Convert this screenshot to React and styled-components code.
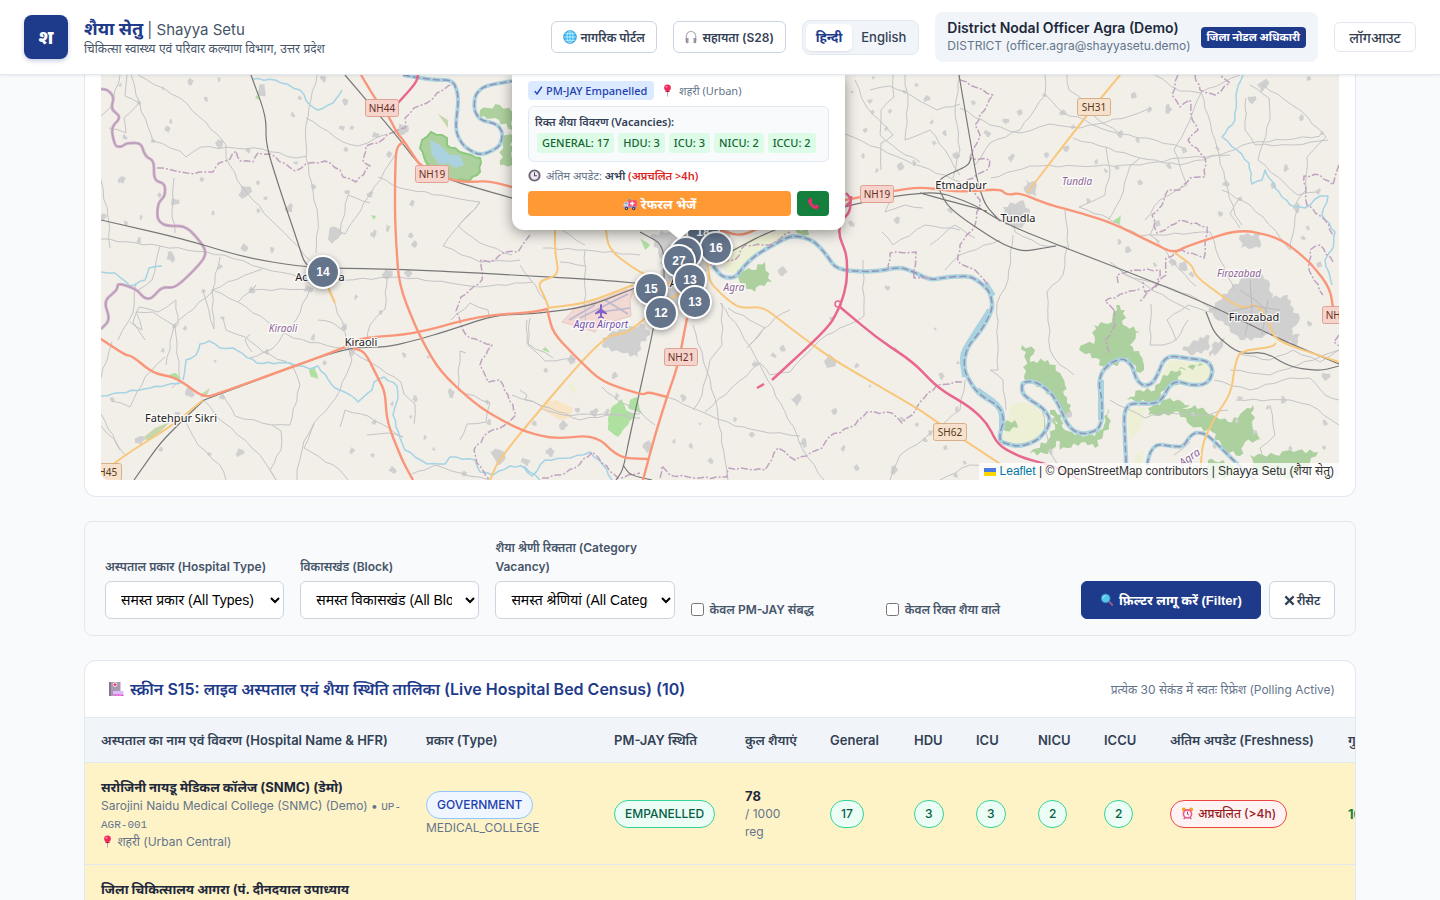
import React from 'react';
import styled, { createGlobalStyle } from 'styled-components';

const GlobalStyle = createGlobalStyle`
  *, *::before, *::after { box-sizing: border-box; }
  body {
    margin: 0;
    background: #f8fafc;
    color: #1e293b;
    font-family: Inter, 'Noto Sans', 'Noto Sans Devanagari', sans-serif;
    font-size: 14px;
  }
  button, a, select { font-family: inherit; }
`;

/* ---------- icons ---------- */

const Icon = styled.svg`
  width: ${(p) => p.$size || 14}px;
  height: ${(p) => p.$size || 14}px;
  flex: none;
  vertical-align: -2px;
`;

const GlobeIcon = () => (
  <Icon viewBox="0 0 16 16" aria-hidden="true">
    <circle cx="8" cy="8" r="7.3" fill="#35b7ee" />
    <g fill="none" stroke="#d8f3ff" strokeWidth="0.9">
      <ellipse cx="8" cy="8" rx="3.4" ry="7.2" />
      <path d="M8 .8v14.4M.8 8h14.4M2 4.2h12M2 11.8h12" />
    </g>
    <circle cx="8" cy="8" r="7.3" fill="none" stroke="#1683c4" strokeWidth="0.7" />
  </Icon>
);

const HeadphoneIcon = () => (
  <Icon viewBox="0 0 16 16" aria-hidden="true">
    <path d="M2.6 11V7.5a5.4 5.9 0 0 1 10.8 0V11" fill="none" stroke="#b9b3bf" strokeWidth="1.5" />
    <rect x="2" y="9" width="3.6" height="6" rx="1.6" fill="#8d8394" />
    <rect x="10.4" y="9" width="3.6" height="6" rx="1.6" fill="#8d8394" />
    <rect x="4.2" y="9.4" width="1.4" height="5.2" rx="0.7" fill="#d9d3dd" />
    <rect x="10.4" y="9.4" width="1.4" height="5.2" rx="0.7" fill="#d9d3dd" />
  </Icon>
);

const PushpinIcon = () => (
  <Icon viewBox="0 0 16 16" $size={13} aria-hidden="true">
    <path d="M7.3 8h1.4L8.3 15.6h-.6z" fill="#9b93a3" />
    <circle cx="8" cy="4.6" r="4.1" fill="#f0285f" />
    <circle cx="6.8" cy="3.4" r="1.3" fill="#ff8ba6" />
    <path d="M5 8.2h6l-.8 1.6H5.8z" fill="#c81a4c" />
  </Icon>
);

const ClockIcon = () => (
  <Icon viewBox="0 0 16 16" $size={13} aria-hidden="true">
    <circle cx="8" cy="8" r="6.3" fill="#eee9f1" stroke="#6d6474" strokeWidth="2.4" />
    <path d="M8 4v4.3h3" fill="none" stroke="#51475a" strokeWidth="1.3" />
  </Icon>
);

const AmbulanceIcon = () => (
  <Icon viewBox="0 0 16 16" aria-hidden="true">
    <path d="M5.5 3.6h10v8.8h-10z" fill="#f14d77" />
    <path d="M.6 8.6 2.6 5.4h3.6v7H.6z" fill="#ded4ea" />
    <path d="M1.8 8.4 3 6.4h2v2z" fill="#4db3e8" />
    <path d="M9.7 5h1.6v1.7H13v1.6h-1.7V10H9.7V8.3H8V6.7h1.7z" fill="#fff" />
    <path d="M.4 10.6h15.2v2H.4z" fill="#a594c4" />
    <circle cx="4" cy="13" r="1.9" fill="#433a4e" />
    <circle cx="12.2" cy="13" r="1.9" fill="#433a4e" />
    <circle cx="4" cy="13" r=".7" fill="#c9bfd6" />
    <circle cx="12.2" cy="13" r=".7" fill="#c9bfd6" />
    <path d="M6.4 2.2h2.2v1.4H6.4z" fill="#3da0ee" />
  </Icon>
);

const PhoneIcon = () => (
  <Icon viewBox="0 0 16 16" $size={13} aria-hidden="true">
    <path
      d="M1.4 3.2 3.6 1c.5-.4 1-.3 1.4.2l1.6 2.4c.3.5.2.9-.2 1.3l-1 1c.9 2 2.5 3.7 4.8 4.9l1-1c.4-.4.9-.5 1.3-.1l2.3 1.6c.5.4.6.9.2 1.4l-2 2C8.2 16.4.2 8.8 1.4 3.2z"
      fill="#e62f6f"
    />
    <path d="m1.4 3.2 2.2-2.2 1 .4-2.3 2.7zM13 14.7l2-2-.5-.9-2.6 2.3z" fill="#a92358" />
  </Icon>
);

const SearchIcon = () => (
  <Icon viewBox="0 0 16 16" aria-hidden="true">
    <path d="m9.4 10.2 1.5-1.5 4 4.3c.7.9-.8 2.5-1.7 1.7z" fill="#9b5a92" />
    <circle cx="6.5" cy="6.2" r="5" fill="#53c8ec" stroke="#3b87b5" strokeWidth="1" />
    <path d="M3.6 6a3 3 0 0 1 2.6-2.9" fill="none" stroke="#b7efff" strokeWidth="1" />
  </Icon>
);

const HospitalIcon = () => (
  <Icon viewBox="0 0 16 16" $size={16} aria-hidden="true">
    <path d="M1 1h11.5v14H1z" fill="#a89bb0" />
    <path d="M1 1h2v14H1z" fill="#85778f" />
    <circle cx="7" cy="3.6" r="2.3" fill="#fbdfe8" />
    <path d="M6.4 2.2h1.2v.8h.8v1.2h-.8V5H6.4v-.8h-.8V3h.8z" fill="#ec2b64" />
    <path d="M5 10h10.5v3.5H5z" fill="#dfb9ff" />
    <path d="M5 13.5h10.5V15H5z" fill="#e24fd0" />
    <path d="M6 15v-1.2M9 15v-1.2M12 15v-1.2" stroke="#fff" strokeWidth=".7" />
  </Icon>
);

const AlarmIcon = () => (
  <Icon viewBox="0 0 16 16" $size={13} aria-hidden="true">
    <circle cx="3.5" cy="3" r="2.4" fill="#f6a41f" />
    <circle cx="12.5" cy="3" r="2.4" fill="#f6a41f" />
    <path d="m3.4 15 1.6-2.4M12.6 15 11 12.6" stroke="#8b6a8b" strokeWidth="1.6" />
    <circle cx="8" cy="8.6" r="5" fill="#fff0f4" stroke="#f0568a" strokeWidth="2" />
    <path d="M8 5.6v3.2l1.6 1" fill="none" stroke="#4d3a55" strokeWidth="1.1" />
  </Icon>
);

const CheckIcon = () => (
  <Icon viewBox="0 0 12 12" $size={9} aria-hidden="true">
    <path d="M1 6.8 4 10.5 10.5 1" fill="none" stroke="#1e40af" strokeWidth="1.9" />
  </Icon>
);

const CrossIcon = () => (
  <Icon viewBox="0 0 12 12" $size={11} aria-hidden="true">
    <path d="m1.5 1.5 9 9M10.5 1.5l-9 9" fill="none" stroke="#334155" strokeWidth="2.4" />
  </Icon>
);

/* ---------- header ---------- */

const Shell = styled.div`
  display: flex;
  flex-direction: column;
  height: 100vh;
  overflow: hidden;
`;

const TopBar = styled.header`
  display: flex;
  flex: none;
  align-items: center;
  justify-content: space-between;
  gap: 16px;
  padding: 12px 24px;
  background: #fff;
  border-bottom: 1px solid #e2e8f0;
  box-shadow: 0 1px 3px rgba(15, 23, 42, 0.08);
  position: relative;
  z-index: 2;
  white-space: nowrap;
`;

const Brand = styled.div`
  display: flex;
  align-items: center;
  gap: 16px;
`;

const LogoMark = styled.div`
  display: grid;
  place-items: center;
  width: 44px;
  height: 44px;
  border-radius: 8px;
  background: #1e3a8a;
  color: #fff;
  font-size: 19px;
  font-weight: 800;
  box-shadow: 0 2px 4px rgba(30, 58, 138, 0.25);
`;

const BrandName = styled.h1`
  margin: 0;
  color: #1e3a8a;
  font-size: 18px;
  line-height: 22px;
  font-weight: 700;

  span {
    color: #475569;
    font-size: 15px;
    font-weight: 400;
  }
`;

const BrandSub = styled.p`
  margin: 0;
  color: #475569;
  font-size: 12px;
  line-height: 16px;
`;

const TopActions = styled.nav`
  display: flex;
  align-items: center;
  gap: 16px;
`;

const PillLink = styled.a`
  display: inline-flex;
  align-items: center;
  justify-content: center;
  gap: 4px;
  min-width: ${(p) => p.$width}px;
  height: 32px;
  border: 1px solid #cbd5e1;
  border-radius: 6px;
  background: #fff;
  color: #334155;
  font-size: 12px;
  font-weight: 600;
  text-decoration: none;
`;

const LangSwitch = styled.div`
  display: flex;
  padding: 3px;
  border: 1px solid #e2e8f0;
  border-radius: 8px;
  background: #f1f5f9;
`;

const LangButton = styled.button`
  height: 27px;
  padding: 0 ${(p) => (p.$active ? 10 : 9)}px;
  border: 0;
  border-radius: 5px;
  background: ${(p) => (p.$active ? '#fff' : 'transparent')};
  color: ${(p) => (p.$active ? '#1e3a8a' : '#334155')};
  font-size: 13px;
  font-weight: ${(p) => (p.$active ? 700 : 500)};
  box-shadow: ${(p) => (p.$active ? '0 1px 2px rgba(15, 23, 42, 0.1)' : 'none')};
`;

const UserBox = styled.div`
  display: flex;
  align-items: center;
  gap: 10px;
  height: 50px;
  padding: 0 12px;
  border-radius: 8px;
  background: #f1f5f9;
`;

const UserName = styled.div`
  font-size: 14px;
  line-height: 18px;
  font-weight: 600;
`;

const UserMail = styled.div`
  color: #64748b;
  font-size: 12px;
  line-height: 18px;
`;

const RoleTag = styled.span`
  padding: 2px 6px;
  border-radius: 4px;
  background: #1e3a8a;
  color: #fff;
  font-size: 11px;
  line-height: 17px;
  font-weight: 700;
`;

const LogoutButton = styled.button`
  width: 82px;
  height: 30px;
  padding: 0;
  border: 1px solid #e2e8f0;
  border-radius: 6px;
  background: #fff;
  color: #334155;
  font-size: 14px;
  font-weight: 500;
`;

/* ---------- map ---------- */

const Main = styled.main`
  display: flex;
  flex-direction: column;
  gap: 24px;
  width: 100%;
  max-width: 1320px;
  margin: 0 auto;
  padding: 0 24px;
`;

const MapCard = styled.section`
  padding: 0 16px 16px;
  border: 1px solid #e2e8f0;
  border-top: 0;
  border-radius: 0 0 12px 12px;
  background: #fff;
`;

const MapFrame = styled.div`
  position: relative;
  height: 405px;
  overflow: hidden;
  border-radius: 0 0 8px 8px;
  background: #f2efe9;
`;

const MapSvg = styled.svg`
  display: block;
  width: 100%;
  height: 100%;
  font-family: 'Noto Sans', sans-serif;
`;

const Marker = styled.button`
  position: absolute;
  left: calc(50% + ${(p) => p.$x - 737}px);
  top: ${(p) => p.$y - 92}px;
  width: 34px;
  height: 34px;
  padding: 0;
  border: 2px solid #fff;
  border-radius: 50%;
  background: #64748b;
  color: #fff;
  font: 700 12px 'Liberation Sans', sans-serif;
  box-shadow: 0 2px 6px rgba(0, 0, 0, 0.35);
`;

const Popup = styled.div`
  position: absolute;
  left: calc(50% - 208px);
  bottom: 250px;
  width: 333px;
  padding: 7px 16px 14px;
  border-radius: 0 0 12px 12px;
  background: #fff;
  font-family: 'Noto Sans', 'Noto Sans Devanagari', sans-serif;
  font-size: 11px;
  box-shadow: 0 3px 14px rgba(0, 0, 0, 0.4);

  &::after {
    content: '';
    position: absolute;
    left: 50%;
    top: 100%;
    margin-left: -11px;
    border: 11px solid transparent;
    border-top: 9px solid #fff;
    border-bottom: 0;
  }
`;

const PopupLine = styled.div`
  display: flex;
  align-items: center;
  gap: 5px;
  height: 19px;
  margin-bottom: 6px;
  color: #64748b;
  white-space: nowrap;

  strong { color: #334155; font-weight: 600; }
  em { color: #dc2626; font-style: normal; font-weight: 600; }
`;

const PmjayTag = styled.span`
  display: inline-flex;
  align-items: center;
  gap: 3px;
  width: 126px;
  margin-right: 2px;
  padding-left: 6px;
  border-radius: 4px;
  background: #dbeafe;
  color: #1e40af;
  line-height: 19px;
  font-weight: 500;
`;

const VacancyBox = styled.div`
  height: 56px;
  margin-bottom: 4px;
  padding: 5px 6px;
  border: 1px solid #e2e8f0;
  border-radius: 6px;
  background: #f8fafc;
  color: #334155;
  line-height: 19px;
  font-weight: 600;
`;

const ChipRow = styled.div`
  display: flex;
  gap: 4px;
  margin: 2px 2px 0;
`;

const Chip = styled.span`
  padding: 0 5px;
  border-radius: 3px;
  background: #dcfce7;
  color: #166534;
  line-height: 20px;
  font-weight: 500;
  white-space: nowrap;
`;

const PopupActions = styled.div`
  display: grid;
  grid-template-columns: 1fr 32px;
  gap: 6px;
`;

const PopupButton = styled.button`
  display: flex;
  align-items: center;
  justify-content: center;
  gap: 4px;
  height: 25px;
  padding: 0;
  border: 0;
  border-radius: 4px;
  background: ${(p) => (p.$call ? '#15803d' : '#ff9933')};
  color: #fff;
  font-size: 13px;
  font-weight: 700;
`;

const Attribution = styled.div`
  position: absolute;
  right: 0;
  bottom: 0;
  display: flex;
  align-items: center;
  gap: 4px;
  padding: 0 5px;
  background: rgba(255, 255, 255, 0.8);
  color: #333;
  font: 12px/17px 'Liberation Sans', 'Noto Sans', sans-serif;
  white-space: nowrap;

  a { color: #0078a8; text-decoration: none; }
`;

const FlagIcon = styled.svg`
  width: 12px;
  height: 8px;
`;

// "M1 2 3 4M5 6 7 8" -> [[[1, 2], [3, 4]], [[5, 6], [7, 8]]]
const parse = (d) =>
  d.replace(/z/g, '').split('M').filter(Boolean).map((part) => {
    const n = part.trim().split(/\s+/).map(Number);
    return n.filter((_, i) => i % 2 === 0).map((x, i) => [x, n[i * 2 + 1]]);
  });

// rounds the corners of a polyline
const smooth = (list) =>
  parse(list.join('')).map((pts) => {
    let d = `M${pts[0].join(' ')}`;
    for (let i = 1; i < pts.length - 1; i++) {
      const [ax, ay] = pts[i - 1];
      const [x, y] = pts[i];
      const [bx, by] = pts[i + 1];
      d += `L${x + (ax - x) * 0.4} ${y + (ay - y) * 0.4}Q${x} ${y} ${x + (bx - x) * 0.4} ${y + (by - y) * 0.4}`;
    }
    return `${d}L${pts[pts.length - 1].join(' ')}`;
  }).join('');

// breaks long edges into short ragged ones
const ragged = (list, amp, step, close) =>
  parse(list.join('')).map((pts) => {
    const all = close ? [...pts, pts[0]] : pts;
    let d = `M${all[0].join(' ')}`;
    for (let i = 1; i < all.length; i++) {
      const [ax, ay] = all[i - 1];
      const [bx, by] = all[i];
      const len = Math.hypot(bx - ax, by - ay) || 1;
      const n = Math.max(1, Math.round(len / step));
      for (let k = 1; k < n; k++) {
        const off = Math.sin(ax * 3.1 + by * 1.7 + k * 2.4) * amp;
        const t = k / n;
        d += `L${(ax + (bx - ax) * t - ((by - ay) / len) * off).toFixed(1)} ${(ay + (by - ay) * t + ((bx - ax) / len) * off).toFixed(1)}`;
      }
      d += `L${bx} ${by}`;
    }
    return close ? `${d}z` : d;
  }).join('');

const villages = [
  [120, 85, 2], [163, 89, 2], [139, 103, 3], [191, 82, 4], [219, 79, 3], [206, 99, 3], [167, 129, 4], [171, 122, 3],
  [125, 137, 3], [153, 141, 3], [219, 143, 6], [248, 151, 3], [296, 163, 3], [122, 180, 5], [202, 179, 3], [174, 202, 6],
  [245, 192, 8], [258, 183, 3], [266, 198, 3], [289, 208, 5], [213, 213, 3], [258, 211, 3], [104, 217, 4], [141, 217, 3],
  [126, 223, 3], [159, 195, 3], [262, 92, 8], [293, 115, 3], [300, 98, 3], [345, 101, 5], [323, 79, 4], [342, 128, 4],
  [352, 128, 3], [346, 149, 3], [375, 135, 5], [402, 130, 8], [389, 155, 4], [348, 192, 4], [370, 194, 4], [412, 203, 4],
  [313, 187, 4], [335, 235, 9], [388, 228, 4], [375, 232, 3], [414, 244, 4], [139, 241, 4], [171, 257, 6], [245, 248, 5],
  [272, 249, 4], [335, 233, 7], [373, 235, 4], [411, 236, 4], [252, 290, 4], [308, 289, 6], [387, 274, 7], [408, 274, 5],
  [223, 318, 3], [175, 326, 3], [185, 328, 3], [203, 291, 3], [220, 267, 3], [356, 297, 3], [381, 312, 3], [344, 327, 4],
  [313, 338, 4], [267, 352, 3], [325, 363, 3], [352, 350, 6], [404, 355, 3], [428, 357, 2], [163, 351, 3], [190, 392, 6],
  [222, 397, 4], [215, 361, 2], [112, 400, 3], [178, 414, 4], [140, 440, 6], [161, 449, 3], [209, 454, 3], [240, 453, 5],
  [352, 451, 4], [373, 455, 3], [374, 422, 3], [392, 404, 3], [415, 399, 4], [411, 417, 2], [425, 437, 3], [451, 393, 5],
  [487, 402, 3], [489, 423, 4], [434, 449, 2], [393, 470, 5], [464, 473, 4], [498, 457, 9], [526, 462, 6], [550, 452, 5],
  [546, 370, 3], [534, 424, 3], [534, 423, 3], [563, 426, 6], [578, 410, 4], [594, 412, 5], [607, 412, 4], [571, 360, 6],
  [615, 376, 4], [617, 396, 4], [551, 452, 5], [647, 446, 7], [674, 442, 3], [691, 446, 3], [711, 461, 4], [735, 419, 3],
  [683, 398, 4], [700, 424, 2], [752, 435, 4], [783, 348, 4], [773, 355, 4], [755, 364, 4], [782, 272, 6], [888, 288, 4],
  [832, 318, 3], [797, 399, 7], [829, 362, 9], [857, 366, 3], [870, 386, 2], [942, 376, 4], [834, 411, 4], [843, 449, 4],
  [804, 443, 5], [857, 468, 4], [894, 469, 6], [930, 433, 3], [902, 419, 3], [917, 425, 3], [956, 475, 3], [895, 349, 3],
  [852, 92, 2], [873, 78, 2], [905, 92, 3], [870, 101, 3], [890, 111, 3], [916, 85, 3], [927, 99, 4], [932, 122, 3],
  [873, 112, 3], [865, 130, 3], [886, 129, 3], [863, 156, 3], [901, 167, 5], [877, 170, 3], [914, 163, 3], [934, 143, 3],
  [897, 221, 5], [945, 133, 3], [950, 210, 4], [956, 155, 5], [973, 103, 3], [988, 134, 5], [1006, 121, 4], [1020, 112, 4],
  [1044, 95, 3], [1063, 113, 4], [1073, 127, 3], [1047, 155, 4], [1066, 148, 4], [1011, 158, 5], [1096, 162, 3], [1134, 96, 4],
  [1150, 109, 4], [1168, 109, 5], [1184, 150, 4], [1120, 135, 5], [1138, 140, 3], [1169, 166, 4], [1140, 182, 4], [1088, 201, 3],
  [1106, 171, 3], [1117, 168, 3], [1158, 223, 4], [1217, 148, 3], [1226, 184, 4], [1240, 199, 3], [1221, 214, 4], [1252, 99, 5],
  [1263, 85, 8], [1301, 118, 4], [1309, 79, 3], [1322, 133, 3], [1286, 168, 4], [1273, 185, 4], [1318, 192, 4], [1297, 208, 5],
  [1308, 228, 3], [1128, 249, 5], [1119, 242, 3], [1155, 265, 3], [1173, 263, 5], [1184, 266, 6], [1191, 274, 4], [1303, 238, 3],
  [1319, 265, 4], [1310, 324, 4], [1326, 376, 5], [1215, 353, 3], [935, 329, 2], [958, 363, 2], [940, 374, 2], [957, 409, 3],
  [1069, 414, 4], [1052, 420, 3], [1051, 452, 3], [1237, 421, 3], [1268, 407, 3], [1283, 400, 4], [1325, 423, 4], [1324, 448, 3],
  [1215, 446, 3], [1193, 414, 3], [925, 440, 3], [945, 448, 3], [965, 463, 3], [1240, 398, 3], [1255, 432, 3], [1290, 448, 3],
];

const blob = ([x, y, s], i) => {
  const pts = [];
  for (let k = 0; k < 9; k++) {
    const r = s * (0.76 + 0.28 * Math.sin(i * 2.3 + k * k * 1.7));
    const a = (k / 9) * Math.PI * 2 + i;
    pts.push(`${(x + Math.cos(a) * r * 0.9).toFixed(1)} ${(y + Math.sin(a) * r).toFixed(1)}`);
  }
  return `M${pts.join('L')}z`;
};

const lanes = [
  'M127 75 125 96 139 103 124 118 126 133 109 128M131 75 136 95 148 127 153 141 180 151 186 157 201 147 262 149 296 158 307 156',
  'M138 75 180 98 218 135 226 145 226 158 242 187 270 219 291 240 312 262',
  'M317 75 309 107 306 125 306 158 313 190 318 220 316 253M306 118 320 127 343 142 358 146 387 134',
  'M101 116 111 107 120 75M101 180 108 217 110 248M174 178 172 210 175 233',
  'M378 177 400 188 450 197 480 202M395 155 370 195 345 234 340 232 348 195 370 203',
  'M455 230 480 202M480 202 468 216 458 226 480 243M512 255 480 243',
  'M101 239 160 246 224 255 262 268 310 279 325 281 400 277 450 283 480 287 533 282',
  'M160 246 152 280 138 290M220 257 212 292 174 325 166 365M203 291 214 329 212 290 245 275 262 269',
  'M136 283 133 313 118 340M137 312 153 312 175 326 180 380 172 388',
  'M101 378 112 342M136 312 142 330 130 322M178 325 176 300 158 312 139 307 133 322 145 340',
  'M212 290 238 302 268 322 293 338 353 351M223 318 226 330 245 337 263 352 292 365 300 385 290 425 272 425',
  'M238 302 256 285 252 290 310 289 296 320 272 349 250 358M252 352 245 340 250 334',
  'M318 320 333 323 345 332 348 347 352 360 340 390 330 405 314 423 304 441 297 470 297 480M328 288 345 330',
  'M387 276 385 309 370 325 367 341M353 352 380 368 401 382 404 394 415 404 414 424',
  'M204 400 217 417 245 440 260 455 276 480M222 393 235 416 272 425 281 431 281 450 270 470 276 480',
  'M185 420 198 445 220 465 226 480M101 426 115 440 125 455M101 414 120 450M112 401 130 407 145 377 165 357',
  'M314 424 304 448 340 470 348 480M340 427 345 410 368 416 403 437 388 433 367 435',
  'M451 320 470 303 488 310 489 315M530 318 528 345 545 361 576 359',
  'M466 353 460 351 458 390 490 403 486 422 467 424 460 440M435 465 460 473 490 480M512 395 550 408 580 420 607 415 640 414',
  'M527 320 527 343 553 358M435 465 425 470 412 474M455 230 443 246 480 262 520 260',
  'M543 248 585 250 585 330M562 230 585 245M520 265 545 300M560 262 585 266M585 250 640 255',
  'M720 303 740 330 760 365 797 435 803 450 824 480M728 308 765 328 750 345M747 348 775 318 790 310',
  'M705 412 760 363 770 375 790 372 800 360 820 340 840 328 850 324 864 316 863 260',
  'M667 397 700 411 735 426 760 431 800 436M693 325 715 398 725 460 728 480M722 303 722 345 710 360 702 395 693 410',
  'M540 408 563 415 604 414 640 418M602 387 620 402 640 412 655 425M520 390 527 395 525 400 550 408',
  'M855 80 866 106 893 135 881 143 881 170M893 75 894 97 881 110 880 135 898 150 920 162',
  'M845 134 905 160 960 182M930 130 945 150 960 175M905 75 908 105 905 140 930 130',
  'M880 185 893 198 885 212 905 205 923 208M882 232 893 245 925 225 960 230M870 90 890 86 912 96 937 110 960 104',
  'M960 75 955 108 960 150 953 178M960 108 990 125 1020 133 1050 124 1080 128 1130 116 1150 108',
  'M1045 75 1045 95 1020 130 990 143 975 165M1067 75 1069 90 1086 103 1096 118 1120 134 1155 140 1183 148',
  'M1046 95 1063 113 1085 120 1100 128 1117 133M1073 138 1100 146 1140 158 1180 165 1220 155 1250 143 1320 136',
  'M991 178 1030 166 1096 166 1140 165 1180 158 1230 155M1106 148 1110 170 1105 195 1079 207 1110 219M1140 158 1130 166 1120 200 1108 220',
  'M1155 75 1180 91 1200 93 1240 75M1201 92 1215 140 1225 180 1235 215 1242 225M1201 93 1185 130 1174 150 1187 185 1160 200 1145 220',
  'M1250 85 1269 98 1270 120 1258 160 1298 195 1317 192M1246 98 1245 130 1255 145 1293 145 1328 140M1263 85 1300 110 1326 137 1307 157 1306 190 1295 205',
  'M1222 190 1250 205 1275 230 1290 250 1297 210M1240 197 1230 214 1240 228M1155 220 1150 235 1160 242',
  'M1010 210 1015 232 1040 245 1067 247 1063 275 1047 292 1050 350 1060 365 1074 375M1065 210 1069 250',
  'M930 245 955 225 975 238M945 270 960 255 1000 240M1013 235 1008 280 997 303 998 370 990 370 1003 380 1006 410',
  'M1151 304 1150 345 1163 345 1176 340 1188 320M1176 340 1167 320 1188 305 1208 312M1215 310 1190 295 1160 285 1125 275 1110 262',
  'M1120 270 1170 300 1190 310M1110 220 1140 236 1210 232 1220 260 1235 290M1155 238 1180 270 1196 286',
  'M1339 350 1320 362 1293 350 1270 360 1239 354M1236 400 1290 400 1310 405 1339 425M1270 405 1275 435 1260 448 1270 470',
  'M1214 380 1250 390 1290 378 1310 378 1325 395 1339 400M1230 370 1270 375 1339 350M1110 400 1145 418 1168 412 1200 416 1228 410',
  'M1190 442 1174 455M1042 410 1050 452 1060 470M940 480 970 465 1010 468M890 480 900 455 925 438 960 410 965 380',
];

const rails = [
  'M251 75 266 116 266 145 280 190 297 240 305 265 318 269',
  'M345 75 380 116 400 140 420 166 450 180 480 189 512 198 560 214',
  'M101 220 180 238 247 258 310 268 400 269 533 276 600 280 635 283',
  'M204 400 223 393 343 348 387 347 413 341 447 331 495 315 533 314 587 307 635 288',
  'M204 400 185 418 160 443 134 480M655 320 650 345 630 435 623 470 616 480M623 465 630 475 652 480',
  'M640 232 664 245 664 285M730 252 770 231 845 206 900 195 940 192 975 205 1000 221 1040 238 1200 300 1277 338 1339 364',
  'M959 75 971 145 977 180 985 205 1000 221M971 158 968 166 940 178 938 188 950 210 1015 253 1056 246',
  'M1206 312 1215 335 1240 354 1265 352 1290 367 1320 371 1339 366M920 193 945 200 987 211',
];

const trunkRoads = [
  'M361 75 376 100 388 115 397 133 404 141 415 158 420 165 450 180 470 182 490 181 530 192',
  'M404 141 396 148 395 180 395 215 396 240 399 285 418 333 440 372 480 408 520 430 553 439 595 435 620 458 648 459',
  'M101 339 125 355 132 356 153 373 177 378 204 398 223 392 347 347 360 338 413 334 480 316 533 312 547 309',
  'M353 348 365 352 378 378 385 392 387 422 402 460 413 480',
  'M547 309 553 333 577 358 602 382 643 395 648 392 667 397M687 318 678 365 667 397 655 435 643 480',
  'M845 200 893 191 920 187 960 192 1000 189 1007 195 1020 193 1047 204 1073 211 1110 222 1153 243 1173 253 1190 245 1240 229 1280 238 1310 262 1330 288 1334 315',
  'M720 230 740 236 760 228',
];

const stateRoads = [
  'M555 225 555 252 559 275 537 282 546 300 549 309M605 225 609 250 640 273 672 285M547 308 587 303 633 285',
  'M707 255 708 267 710 283 728 300 740 308 763 307 780 320 810 343 837 362 917 408 937 422 1000 464 1025 480',
  'M490 480 500 457 602 337 627 333 643 320 678 293 700 285',
  'M101 474 125 455 173 425 203 400M328 287 335 303M1120 75 1087 115 1027 193',
  'M1175 253 1192 265 1196 277 1240 309 1258 304 1270 325 1276 341 1339 362',
  'M1276 343 1272 347 1240 351 1235 365 1231 393 1213 420 1202 445 1200 480',
];

const motorways = [
  'M418 75 416 83 398 103M851 196 850 212 840 222 839 236 847 255 847 283 840 307 828 328 772 380',
  'M764 384 757 388M840 307 877 338 913 362 938 388 970 407 987 423 998 445 1020 457 1060 468 1080 480M846 193 852 200 846 206',
];

const brooks = [
  'M101 272 115 273 130 286 145 280 149 268 162 266M101 396 150 388 183 382M183 380 186 360 196 355 200 344 209 341 220 348 233 348 257 363 290 363 310 369 318 366 335 388 350 395 358 402 372 390 374 382 384 377 397 386 398 398 393 415 400 438 405 450 427 464 445 464 450 457 475 460 480 472 493 475 510 466 525 467 540 480',
  'M253 79 275 80 300 90 310 105 318 110 333 103 342 90M520 465 532 476 545 460 570 458 590 452 603 465 612 480',
  'M1243 75 1237 90 1235 120 1222 137 1237 150 1249 163 1252 184 1262 180 1265 170 1275 188 1290 205 1305 208 1320 196 1328 196 1322 215 1335 232 1333 248 1325 260 1332 285',
];

const yamuna = [
  'M713 266 722 277 735 278 745 265 756 255 773 245 790 236 803 237 815 242 825 253 837 270 873 272 900 267 914 272 930 280 948 277 970 276 981 283 990 292 993 308 983 328 968 346 964 360 965 373 977 393 1000 407 1004 420 1000 433 1000 442 1020 447 1038 440 1048 428 1050 418 1043 408 1030 400 1022 393 1022 383 1030 381 1040 384 1053 395 1061 410 1067 424 1075 432 1085 434 1098 430 1102 420 1102 400 1099 385 1101 373 1110 363 1123 358 1132 365 1136 379 1143 386 1152 384 1158 374 1163 361 1170 356 1187 358 1208 361 1213 370 1210 380 1203 385 1190 385 1177 381 1169 386 1163 398 1155 404 1130 403 1124 412 1125 440 1127 480',
];
const yamunaNorth = ['M403 75 433 80 453 80 459 97 455 130 463 146 480 156 500 147 503 133 497 124 480 120 474 110 475 95 484 86 512 81'];
const yamunaSouth = ['M1147 465 1150 452 1157 444 1170 446 1183 447 1190 436 1197 432 1208 435 1233 460 1255 480'];

const districtLines = [
  'M157 168 168 169 187 173 213 172 219 163 230 159 236 151 240 161 253 162 258 153 270 154 295 171 306 164 325 161 340 170 343 177 356 182 370 166 363 162 366 146 378 143 388 134 405 128 405 118 414 108 427 103 437 93 455 83',
  'M530 235 518 252 505 252 490 262 481 260 482 280 470 290 461 297 456 311 463 330 470 338 492 345 488 350 480 365 488 382 500 380 508 395 516 415 505 425 487 433 474 450 477 463 490 480',
  'M542 478 560 475 575 468 592 452 602 463 618 478 640 473M660 478 662 466 670 475 700 478 727 477 729 468 765 470 778 448 795 460 822 448 830 436 855 425 867 412 892 413 902 423 912 415 920 402 937 385 962 382',
  'M710 265 735 260 745 245 770 245 790 232M888 270 890 253 916 252 914 278 930 278',
  'M960 80 993 95 975 125 980 135 970 158 990 160 987 170 967 180 980 200 975 225 960 245 958 262 975 270 988 285',
  'M1178 75 1172 95 1180 107 1190 100 1191 115 1198 130 1188 140 1205 158 1205 177 1190 178 1180 190 1168 190 1162 205 1152 215 1157 233 1165 230 1180 220 1207 227 1204 258 1182 250 1166 258 1166 275 1150 290 1139 302',
  'M1195 75 1200 90 1215 95 1230 83 1220 75M1339 165 1333 185 1320 175 1304 176 1307 205 1325 220 1333 235M1333 262 1320 245 1310 250 1309 270 1323 295',
  'M1118 283 1117 275 1135 270 1160 270 1158 285 1145 292 1143 282M1114 310 1105 301 1125 293 1140 289M1114 310 1115 325 1106 340 1110 355M1339 335 1334 342 1339 346',
];

const stateLine = [
  'M101 89 108 90 114 97 111 109 121 117 111 128 115 146 121 147 127 143 141 143 145 156 154 161 154 180 165 184 165 196 158 203 157 219 165 226 187 226 206 249 204 260 176 288 162 287 151 299 144 298 136 289 118 283 117 290 104 301 110 320 101 329',
];

const sanctuary = ['M422 140 431 132 447 138 447 145 463 153 480 158 480 172 470 180 452 180 428 165 420 148z'];
const forests = [
  'M1116 305 1125 310 1123 325 1140 331 1130 345 1140 355 1144 365 1140 373 1128 358 1105 370 1096 358 1079 350 1085 344 1094 344 1094 325 1112 322z',
  'M1022 345 1035 350 1030 362 1048 360 1060 373 1065 385 1064 395 1071 405 1068 420 1056 402 1045 390 1024 378 1026 360z',
  'M1127 400 1140 390 1155 390 1163 375 1180 370 1178 385 1165 390 1155 403z',
  'M1148 408 1170 398 1190 405 1180 412 1160 416 1148 415z',
  'M1179 412 1195 405 1213 415 1228 422 1238 418 1247 408 1253 405 1253 430 1263 440 1245 442 1240 456 1225 450 1212 432 1190 425z',
  'M1030 453 1048 440 1055 425 1050 410 1062 415 1060 440 1048 454z',
  'M1055 420 1065 430 1075 435 1095 436 1104 425 1108 408 1109 425 1095 448 1085 442 1060 450z',
  'M1250 455 1275 455 1290 450 1318 452 1310 463 1290 480 1255 470z',
  'M1208 460 1230 463 1236 475 1208 480z', 'M1000 424 1015 420 1018 428 1005 431z',
  'M737 270 752 270 765 262 768 278 772 282 760 285 755 292 740 283z', 'M790 228 808 230 809 235 797 233z',
  'M480 110 500 105 512 112 512 165 500 165 503 140 512 130 495 118 480 118z',
  'M1178 370 1200 363 1203 365 1185 370z',
];
const parks = [
  'M611 408 622 399 626 410 635 415 618 437 608 430 608 420z', 'M630 400 637 397 640 410 643 414 628 408z',
  'M309 370 315 367 318 379 311 377z', 'M545 347 550 353 542 350z', 'M176 373 180 379 166 375z',
  'M371 215 376 216 374 220z', 'M1113 222 1121 215 1120 224z', 'M257 95 260 100 255 98z', 'M640 238 650 245 645 250z',
];
const fields = [
  'M1010 405 1025 402 1044 412 1047 427 1035 440 1015 445 1002 440 1007 425z',
  'M1170 360 1210 364 1212 374 1200 383 1182 380 1160 388 1160 380z', 'M1126 408 1146 408 1140 430 1130 440z',
  'M1135 455 1144 450 1142 470 1133 478z', 'M720 255 750 238 790 230 780 242 750 258 742 275 725 272z', 'M567 383 578 388 572 395z',
];
const towns = [
  'M1229 290 1240 280 1255 272 1268 280 1272 298 1288 295 1290 305 1300 318 1285 343 1270 333 1262 338 1240 340 1225 325 1208 312z',
  'M1240 235 1260 234 1260 248 1241 248z', 'M1182 350 1200 337 1210 336 1208 350 1190 355z', 'M1212 345 1225 338 1220 350 1210 357z',
  'M1285 333 1300 334 1297 345 1287 342z',
  'M602 338 620 328 645 325 650 335 640 345 638 357 620 352 604 348z',
  'M650 235 700 225 730 232 725 245 710 258 702 290 690 305 672 308 660 290 662 260z',
  'M1003 207 1023 200 1030 214 1022 228 1005 225z', 'M1026 180 1037 184 1036 196 1025 192z', 'M848 222 858 222 854 227z',
];

const places = [
  ['Etmadpur', 961, 189], ['Tundla', 1018, 222], ['Kiraoli', 361, 346], ['Fatehpur Sikri', 181, 422],
  ['Firozabad', 1254, 321], ['Achhnera', 320, 281], ['Agra', 682, 287],
];
const districts = [['Tundla', 1077, 185], ['Kiraoli', 283, 332], ['Agra', 734, 291], ['Firozabad', 1239, 277]];
const shields = [
  ['NH44', 382, 108], ['NH19', 432, 174], ['NH19', 877, 194], ['NH21', 681, 357], ['NH19', 1339, 315],
  ['SH31', 1094, 107, true], ['SH62', 950, 432, true], ['SH45', 105, 472, true],
];

const DistrictMap = () => (
  <MapSvg viewBox="101 75 1238 405" preserveAspectRatio="xMidYMid slice" role="img" aria-label="Agra district">
    <rect x="-400" y="75" width="2240" height="405" fill="#f2efe9" />
    <path d={ragged(fields, 0.5, 6, true)} fill="#eef0d5" />
    <path d="M547 402 556 400 573 408 570 418 560 420 543 410z" fill="#f7e5c6" />
    <path d={ragged(forests, 2.2, 4, true)} fill="#add19e" />
    <path d={ragged(sanctuary, 1, 5, true)} fill="#add19e" stroke="#8cc97d" strokeWidth="2" />
    <path d={ragged(parks, 0.5, 4, true)} fill="#aee0a0" />
    <path d="M144 437 155 428 170 422 160 432 147 441zM203 393 210 388 207 395 200 398zM438 114 448 120 448 128z" fill="#c8d7ab" />
    <path d={ragged(towns, 2, 4, true)} fill="#d0d0d0" />
    <path d={villages.map(blob).join('')} fill="#d0d0d0" />
    <path d="M562 322 575 308 600 300 625 290 634 290 630 300 631 316 600 325 595 332 580 327z" fill="#f2d9d3" stroke="#dfb7ae" strokeWidth=".6" />
    <path d="M580 318 628 294M600 312 630 308M605 300 628 314M569 320 595 305" stroke="#bcb8cf" strokeWidth="1.5" />
    <path d="M430 140 440 145 450 155 460 155 464 165 455 168 448 163 440 165 432 155z" fill="#aad3df" />

    <g fill="none" strokeLinejoin="round" strokeLinecap="butt">
      <path d={ragged(lanes, 0.9, 9)} stroke="#c4c4c6" strokeWidth="1" />
      <path d={ragged(brooks, 0.8, 6)} stroke="#a5d3e4" strokeWidth="1.5" />
      <path d={smooth(yamuna)} stroke="#aad3df" strokeWidth="4.5" />
      <path d={smooth(['M965 377 962 355 972 338 990 310M977 390 1002 408 1002 430M1101 420 1101 380M985 283 993 296'])} stroke="#aad3df" strokeWidth="6" />
      <path d={smooth([...yamunaNorth, ...yamunaSouth])} stroke="#aad3df" strokeWidth="4" />
      <path d={smooth([...yamuna, ...yamunaNorth, ...yamunaSouth])} stroke="#9093b5" strokeWidth="1.5" strokeDasharray="7 3" />
      <path d={smooth(stateLine)} stroke="#cbb0c8" strokeWidth="3" />
      <path d={smooth(stateLine)} stroke="#b895b6" strokeWidth="1" />
      <path d={ragged(districtLines, 1, 6)} stroke="#c0a3c0" strokeWidth="1.5" strokeDasharray="7 2 2 2" />
      <path d={smooth(rails)} stroke="#777" strokeWidth="1.2" />
      <path d={smooth(stateRoads)} stroke="#f9c77b" strokeWidth="2" />
      <path d={smooth(trunkRoads)} stroke="#f9967a" strokeWidth="2.4" />
      <path d={smooth(motorways)} stroke="#e8688c" strokeWidth="2.5" />
      <circle cx="838" cy="304" r="3" stroke="#e8688c" strokeWidth="1.5" />
      <path d="M1240 290 1255 300 1268 312M1228 312 1255 306 1280 310M1250 280 1252 310 1245 335M1262 335 1268 300" stroke="#bbb" />
    </g>

    <path d="M600 305v4l-5 4v1.5l5-1.5v3l-2 1.5v1l3-.7 3 .7v-1l-2-1.5v-3l5 1.5v-1.5l-5-4v-4q-1-2-2 0z" fill="#8461c4" />
    <g textAnchor="middle" fontSize="11" stroke="#fff" strokeWidth="2.5" strokeOpacity=".8" paintOrder="stroke">
      {places.map(([name, x, y]) => (
        <text key={name} x={x} y={y} fill="#222">{name}</text>
      ))}
      <g fontStyle="italic" fontSize="10" fill="#8d6495">
        {districts.map(([name, x, y]) => (
          <text key={name} x={x} y={y}>{name}</text>
        ))}
        <text x="601" y="328" fill="#6f50ad">Agra Airport</text>
        <text x="1190" y="461" fontSize="11" transform="rotate(-35 1190 458)">Agra</text>
      </g>
    </g>
    {shields.map(([name, x, y, state]) => (
      <g key={name + x}>
        <rect x={x - 16.5} y={y - 8.5} width="33" height="17" rx="2" fill={state ? '#f7e1cd' : '#f6d3cb'} stroke={state ? '#d4b187' : '#dfa193'} />
        <text x={x} y={y + 4} textAnchor="middle" fontSize="10" fill={state ? '#553a1a' : '#6b2f27'}>{name}</text>
      </g>
    ))}
  </MapSvg>
);

const markers = [
  [703, 232, 18], [323, 272, 14], [716, 248, 16], [686, 253, 16], [679, 261, 27], [690, 280, 13], [651, 289, 15], [695, 302, 13], [661, 313, 12],
];

const vacancies = [['GENERAL', 17], ['HDU', 3], ['ICU', 3], ['NICU', 2], ['ICCU', 2]];

/* ---------- filters ---------- */

const FilterPanel = styled.form`
  display: grid;
  grid-template-columns: repeat(5, minmax(0, 1fr)) auto;
  align-items: end;
  gap: 16px;
  padding: 16px 20px;
  border: 1px solid #e2e8f0;
  border-radius: 8px;
  background: #f8fafc;
`;

const Field = styled.div`
  display: flex;
  flex-direction: column;
  gap: 5px;
`;

const FieldLabel = styled.label`
  color: #475569;
  font-size: 12px;
  line-height: 19px;
  font-weight: 600;
`;

const Select = styled.select`
  width: 100%;
  height: 38px;
  padding: 0 10px 0 11px;
  border: 1px solid #cbd5e1;
  border-radius: 6px;
  background: #fff;
  color: #000;
  font-family: 'Liberation Sans', 'Noto Sans', sans-serif;
  font-size: 14px;
`;

const CheckLabel = styled.label`
  display: flex;
  align-items: center;
  gap: 6px;
  color: #475569;
  font-size: 12px;
  line-height: 19px;
  font-weight: 600;

  input { width: 13px; height: 13px; margin: 0; }
`;

const FilterActions = styled.div`
  display: flex;
  gap: 8px;
`;

const FilterButton = styled.button`
  display: flex;
  align-items: center;
  justify-content: center;
  gap: ${(p) => (p.$primary ? 5 : 2)}px;
  width: ${(p) => (p.$primary ? 180 : 66)}px;
  height: 38px;
  padding: 0;
  border: 1px solid ${(p) => (p.$primary ? '#1e3a8a' : '#cbd5e1')};
  border-radius: 6px;
  background: ${(p) => (p.$primary ? '#1e3a8a' : '#fff')};
  color: ${(p) => (p.$primary ? '#fff' : '#334155')};
  font-family: ${(p) => (p.$primary ? "'Liberation Sans', 'Noto Sans', sans-serif" : 'inherit')};
  font-size: ${(p) => (p.$primary ? 13 : 12)}px;
  font-weight: ${(p) => (p.$primary ? 700 : 600)};
  white-space: nowrap;
`;

/* ---------- table ---------- */

const TableCard = styled.section`
  overflow: hidden;
  border: 1px solid #e2e8f0;
  border-radius: 12px;
  background: #fff;
`;

const TableHead = styled.div`
  display: flex;
  align-items: center;
  justify-content: space-between;
  height: 57px;
  padding: 0 20px 0 23px;
  border-bottom: 1px solid #e2e8f0;
`;

const TableTitle = styled.h2`
  display: flex;
  align-items: center;
  gap: 6px;
  margin: 0;
  color: #1e3a8a;
  font-size: 16px;
  font-weight: 600;
`;

const PollNote = styled.span`
  color: #64748b;
  font-size: 12px;
`;

const Table = styled.table`
  width: 1472px;
  border-collapse: collapse;
  table-layout: fixed;
  text-align: left;

  th {
    height: 44px;
    padding: 0 16px;
    border-bottom: 1px solid #e2e8f0;
    background: #f1f5f9;
    color: #334155;
    font-size: 13px;
    font-weight: 600;
    white-space: nowrap;
  }

  td {
    padding: 14px 16px 13px;
    border-bottom: 1px solid #e2e8f0;
    background: #fef3c7;
  }

  td:first-child { padding-right: 8px; }
`;

const HospitalName = styled.div`
  font-size: 13px;
  line-height: 20px;
  font-weight: 700;
`;

const Muted = styled.div`
  color: #64748b;
  font-size: 12px;
  line-height: 18px;

  code {
    font-family: 'Liberation Mono', monospace;
    font-size: 11px;
    line-height: 1;
  }
`;

const BedTotal = styled.div`
  font-size: 13px;
  line-height: 18px;
  font-weight: 700;
`;

const tones = {
  blue: ['#eff6ff', '#93c5fd', '#1e40af'],
  green: ['#ecfdf5', '#34d399', '#065f46'],
  red: ['#fef2f2', '#ef4444', '#991b1b'],
};

const Badge = styled.span`
  display: inline-flex;
  align-items: center;
  gap: 4px;
  height: 28px;
  padding: 0 10px;
  border: 1px solid ${(p) => tones[p.$tone][1]};
  border-radius: 14px;
  background: ${(p) => tones[p.$tone][0]};
  color: ${(p) => tones[p.$tone][2]};
  font-size: 12px;
  font-weight: 500;
  white-space: nowrap;
`;

const Score = styled.strong`
  color: #15803d;
  font-size: 13px;
`;

const colWidths = [325, 188, 131, 85, 84, 62, 62, 66, 66, 178, 225];
const headings = [
  'अस्पताल का नाम एवं विवरण (Hospital Name & HFR)', 'प्रकार (Type)', 'PM-JAY स्थिति', 'कुल शैयाएं',
  'General', 'HDU', 'ICU', 'NICU', 'ICCU', 'अंतिम अपडेट (Freshness)', 'गुणवत्ता',
];

const hospitals = [
  {
    name: 'सरोजिनी नायडू मेडिकल कॉलेज (SNMC) (डेमो)',
    english: 'Sarojini Naidu Medical College (SNMC) (Demo)',
    hfr: 'UP-AGR-001',
    area: 'शहरी (Urban Central)',
    type: 'MEDICAL_COLLEGE',
    total: 78,
    registered: 1000,
    beds: [17, 3, 3, 2, 2],
  },
  {
    name: 'जिला चिकित्सालय आगरा (पं. दीनदयाल उपाध्याय चिकित्सालय) (डेमो)',
    english: 'District Hospital Agra (Pt. Deendayal Upadhyay) (Demo)',
    hfr: 'UP-AGR-002',
    area: 'शहरी (Urban)',
    type: 'DISTRICT_HOSPITAL',
    total: 64,
    registered: 300,
    beds: [16, 2, 2, 1, 1],
  },
];

const filters = [
  ['type', 'अस्पताल प्रकार (Hospital Type)', 'समस्त प्रकार (All Types)'],
  ['block', 'विकासखंड (Block)', 'समस्त विकासखंड (All Blocks)'],
  ['category', 'शैया श्रेणी रिक्तता (Category Vacancy)', 'समस्त श्रेणियां (All Categories)'],
];

const HospitalRow = ({ hospital }) => (
  <tr>
    <td>
      <HospitalName>{hospital.name}</HospitalName>
      <Muted>{hospital.english} • <code>{hospital.hfr}</code></Muted>
      <Muted><PushpinIcon /> {hospital.area}</Muted>
    </td>
    <td>
      <Badge $tone="blue">GOVERNMENT</Badge>
      <Muted>{hospital.type}</Muted>
    </td>
    <td><Badge $tone="green">EMPANELLED</Badge></td>
    <td>
      <BedTotal>{hospital.total}</BedTotal>
      <Muted>/ {hospital.registered} reg</Muted>
    </td>
    {hospital.beds.map((count, i) => (
      <td key={i}><Badge $tone="green">{count}</Badge></td>
    ))}
    <td><Badge $tone="red"><AlarmIcon />अप्रचलित (&gt;4h)</Badge></td>
    <td><Score>100%</Score></td>
  </tr>
);

const App = () => (
  <Shell>
    <GlobalStyle />
    <TopBar>
      <Brand>
        <LogoMark>श</LogoMark>
        <div>
          <BrandName>शैया सेतु <span>| Shayya Setu</span></BrandName>
          <BrandSub>चिकित्सा स्वास्थ्य एवं परिवार कल्याण विभाग, उत्तर प्रदेश</BrandSub>
        </div>
      </Brand>
      <TopActions>
        <PillLink href="#portal" $width={106}><GlobeIcon />नागरिक पोर्टल</PillLink>
        <PillLink href="#support" $width={113}><HeadphoneIcon />सहायता (S28)</PillLink>
        <LangSwitch>
          <LangButton type="button" $active>हिन्दी</LangButton>
          <LangButton type="button">English</LangButton>
        </LangSwitch>
        <UserBox>
          <div>
            <UserName>District Nodal Officer Agra (Demo)</UserName>
            <UserMail>DISTRICT (officer.agra@shayyasetu.demo)</UserMail>
          </div>
          <RoleTag>जिला नोडल अधिकारी</RoleTag>
        </UserBox>
        <LogoutButton type="button">लॉगआउट</LogoutButton>
      </TopActions>
    </TopBar>

    <Main>
      <MapCard>
        <MapFrame>
          <DistrictMap />
          {markers.map(([x, y, count]) => (
            <Marker key={`${x}-${y}`} type="button" $x={x} $y={y}>{count}</Marker>
          ))}
          <Popup>
            <PopupLine>
              <PmjayTag><CheckIcon />PM-JAY Empanelled</PmjayTag>
              <PushpinIcon />शहरी (Urban)
            </PopupLine>
            <VacancyBox>
              रिक्त शैया विवरण (Vacancies):
              <ChipRow>
                {vacancies.map(([ward, count]) => (
                  <Chip key={ward}>{ward}: {count}</Chip>
                ))}
              </ChipRow>
            </VacancyBox>
            <PopupLine>
              <ClockIcon />
              <span>अंतिम अपडेट: <strong>अभी</strong> <em>(अप्रचलित &gt;4h)</em></span>
            </PopupLine>
            <PopupActions>
              <PopupButton type="button"><AmbulanceIcon />रेफरल भेजें</PopupButton>
              <PopupButton type="button" $call aria-label="Call"><PhoneIcon /></PopupButton>
            </PopupActions>
          </Popup>
          <Attribution>
            <FlagIcon viewBox="0 0 12 8" aria-hidden="true">
              <path fill="#4c7be1" d="M0 0h12v4H0z" />
              <path fill="#ffd500" d="M0 4h12v4H0z" />
            </FlagIcon>
            <span><a href="#leaflet">Leaflet</a> | © OpenStreetMap contributors | Shayya Setu (शैया सेतु)</span>
          </Attribution>
        </MapFrame>
      </MapCard>

      <FilterPanel>
        {filters.map(([id, label, value]) => (
          <Field key={id}>
            <FieldLabel htmlFor={id}>{label}</FieldLabel>
            <Select id={id}><option>{value}</option></Select>
          </Field>
        ))}
        <CheckLabel><input type="checkbox" />केवल PM-JAY संबद्ध</CheckLabel>
        <CheckLabel><input type="checkbox" />केवल रिक्त शैया वाले</CheckLabel>
        <FilterActions>
          <FilterButton type="button" $primary><SearchIcon />फ़िल्टर लागू करें (Filter)</FilterButton>
          <FilterButton type="reset"><CrossIcon />रीसेट</FilterButton>
        </FilterActions>
      </FilterPanel>

      <TableCard>
        <TableHead>
          <TableTitle><HospitalIcon />स्क्रीन S15: लाइव अस्पताल एवं शैया स्थिति तालिका (Live Hospital Bed Census) (10)</TableTitle>
          <PollNote>प्रत्येक 30 सेकंड में स्वतः रिफ्रेश (Polling Active)</PollNote>
        </TableHead>
        <Table>
          <colgroup>
            {colWidths.map((width, i) => <col key={i} width={width} />)}
          </colgroup>
          <thead>
            <tr>{headings.map((text) => <th key={text}>{text}</th>)}</tr>
          </thead>
          <tbody>
            {hospitals.map((hospital) => <HospitalRow key={hospital.hfr} hospital={hospital} />)}
          </tbody>
        </Table>
      </TableCard>
    </Main>
  </Shell>
);

export default App;
